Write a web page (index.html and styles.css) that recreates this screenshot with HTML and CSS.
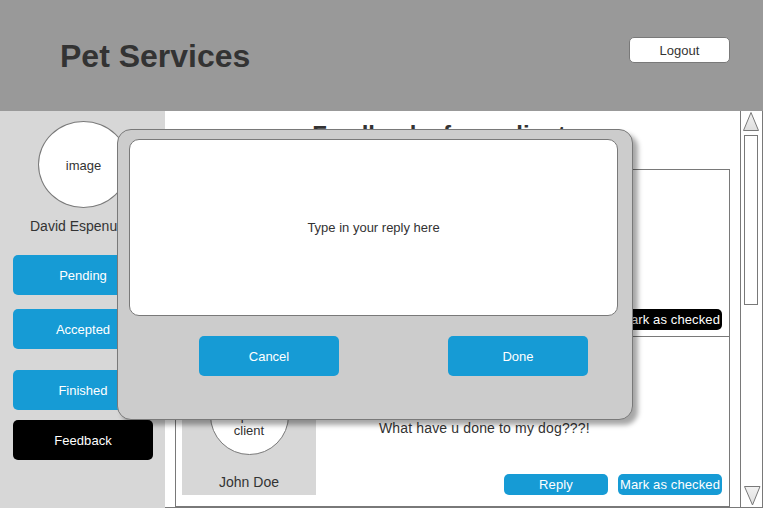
FILE: index.html
```
<!DOCTYPE html>
<html lang="en">
<head>
<meta charset="utf-8">
<title>Pet Services</title>
<link rel="stylesheet" href="styles.css">
</head>
<body>
<header class="header">
  <h1 class="brand">Pet Services</h1>
  <button class="logout">Logout</button>
</header>
<div class="layout">
  <aside class="sidebar">
    <div class="avatar">image</div>
    <div class="username">David Espenuar</div>
    <nav class="menu">
      <button class="btn">Pending</button>
      <button class="btn accepted">Accepted</button>
      <button class="btn finished">Finished</button>
      <button class="btn active">Feedback</button>
    </nav>
  </aside>
  <main class="content">
    <h2 class="title">Feedbacks from client</h2>
    <section class="feedback">
      <article class="item first">
        <div class="actions"><button class="btn small active">Mark as checked</button></div>
      </article>
      <article class="item">
        <div class="client">
          <div class="client-pic">pic<br>client</div>
          <div class="client-name">John Doe</div>
        </div>
        <div class="body">
          <p class="message">What have u done to my dog???!</p>
          <div class="actions">
            <button class="btn small">Reply</button>
            <button class="btn small">Mark as checked</button>
          </div>
        </div>
      </article>
    </section>
  </main>
  <div class="scrollbar">
    <svg class="arrow" width="18" height="21" viewBox="0 0 18 21"><defs><linearGradient id="shade" x2="0" y2="1"><stop stop-color="#f2f2f2"/><stop offset="1" stop-color="#dedede"/></linearGradient></defs><path d="M9 1.5 16.5 19.5H1.5Z"/></svg>
    <div class="thumb"></div>
    <svg class="arrow down" width="18" height="21" viewBox="0 0 18 21"><path d="M1.5 1.5H17L9.5 20Z"/></svg>
  </div>
</div>
<div class="modal">
  <div class="reply">Type in your reply here</div>
  <div class="modal-actions">
    <button class="btn">Cancel</button>
    <button class="btn">Done</button>
  </div>
</div>
</body>
</html>
```

FILE: styles.css
```
* { box-sizing: border-box; }
body {
  margin: 0;
  width: 763px;
  height: 508px;
  overflow: hidden;
  position: relative;
  background: #fff;
  color: #333;
  font: 13px/15px "Liberation Sans", Arial, sans-serif;
}
h1, h2, p { margin: 0; }
button { font: inherit; padding: 0; border: 0; white-space: nowrap; }
.header {
  height: 111px;
  background: #999;
  display: flex;
  justify-content: space-between;
  align-items: flex-start;
  padding: 37px 33px 0 60px;
}
.brand { font-size: 32px; line-height: 37px; padding-top: 1px; }
.logout {
  width: 101px;
  height: 26px;
  background: #fff;
  border: 1px solid #797979;
  border-radius: 5px;
  color: #333;
}
.layout { display: flex; height: 397px; }
.sidebar {
  width: 165px;
  background: #d7d7d7;
  padding: 10px 0 0 13px;
}
.avatar {
  width: 91px;
  height: 87px;
  margin-left: 25px;
  border: 1px solid #797979;
  border-radius: 50%;
  background: #fff;
  display: flex;
  align-items: center;
  justify-content: center;
  padding-top: 2px;
}
.username { margin: 10px 0 0 17px; font-size: 14px; line-height: 16px; white-space: nowrap; }
.menu { display: flex; flex-direction: column; margin-top: 21px; }
.btn {
  width: 140px;
  height: 40px;
  border-radius: 5px;
  background: #169bd5;
  color: #fff;
}
.btn.active { background: #000; }
.accepted { margin-top: 14px; }
.finished { margin: 21px 0 10px; }
.content {
  width: 575px;
  padding-left: 10px;
  border-bottom: 1px solid #797979;
}
.title {
  width: 528px;
  height: 58px;
  padding-top: 10px;
  text-align: center;
  font-size: 24px;
  line-height: 28px;
}
.feedback { width: 555px; border: 1px solid #797979; height: 338px; }
.item { height: 169px; display: flex; padding: 0 7px 0 6px; }
.first { height: 167px; border-bottom: 1px solid #797979; align-items: flex-end; justify-content: flex-end; padding-bottom: 6px; }
.client {
  width: 134px;
  height: 158px;
  background: #d7d7d7;
  padding-top: 39px;
  display: flex;
  flex-direction: column;
  align-items: center;
}
.client-pic {
  width: 79px;
  height: 79px;
  border: 1px solid #797979;
  border-radius: 50%;
  background: #fff;
  text-align: center;
  padding-top: 31px;
}
.client-name { margin-top: 19px; font-size: 14px; line-height: 16px; }
.body { flex: 1; display: flex; flex-direction: column; }
.message { margin: 83px 0 0 63px; font-size: 14px; line-height: 16px; letter-spacing: .15px; }
.actions { display: flex; justify-content: flex-end; gap: 10px; }
.body .actions { margin-top: 38px; }
.small { width: 104px; height: 21px; letter-spacing: .12px; }
.menu .active { letter-spacing: .08px; }
.scrollbar {
  width: 23px;
  border: 1px solid #797979;
  border-top: 0;
  display: flex;
  flex-direction: column;
  padding-left: 1px;
}
.arrow { display: block; fill: url(#shade); stroke: #797979; stroke-width: 1; }
.thumb { width: 14px; height: 170px; margin: 3px 0 0 2px; border: 1px solid #797979; }
.down { margin: auto 0 1px 1px; }
.modal {
  position: absolute;
  left: 117px;
  top: 129px;
  width: 516px;
  height: 291px;
  padding: 9px 14px 0 11px;
  background: #ccc;
  border: 1px solid #797979;
  border-radius: 14px;
  box-shadow: 5px 5px 5px rgba(0, 0, 0, .35);
}
.reply {
  width: 489px;
  height: 177px;
  border: 1px solid #797979;
  border-radius: 10px;
  background: #fff;
  display: flex;
  align-items: center;
  justify-content: center;
}
.modal-actions { display: flex; gap: 109px; margin: 20px 0 0 70px; }
```
